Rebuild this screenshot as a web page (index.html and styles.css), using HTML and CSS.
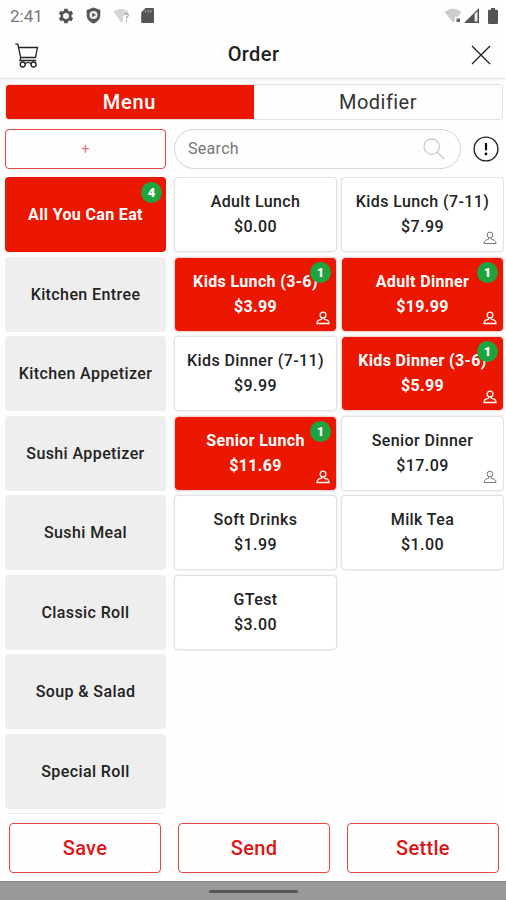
FILE: index.html
```html
<!DOCTYPE html>
<html lang="en">
<head>
<meta charset="utf-8">
<title>Order</title>
<link rel="stylesheet" href="styles.css">
</head>
<body>
<svg class="defs" aria-hidden="true">
  <symbol id="person" viewBox="0 0 14 14"><circle cx="7" cy="4" r="2.900"/><path d="M5.800 6.700 5.600 8.300 2.700 9.200Q1 9.900 1 12.500H13Q13 9.900 11.300 9.200L8.400 8.300 8.200 6.700"/></symbol>
</svg>
<div class="screen">
  <div class="status">
    <span class="clock">2:41</span>
    <svg class="gear" width="16" height="16" viewBox="0 0 24 24"><path fill="#555" fill-rule="evenodd" d="M9.500 1h5l.6 3.200 2 1.100 3.100-1.100 2.500 4.300-2.500 2.100v2.800l2.500 2.100-2.500 4.300-3.100-1.100-2 1.100-.6 3.200h-5l-.6-3.200-2-1.100-3.100 1.100-2.500-4.300 2.500-2.100v-2.800L1.300 8.500l2.500-4.300 3.100 1.100 2-1.100zM12 7.500a4.500 4.500 0 1 0 0 9 4.500 4.500 0 0 0 0-9z"/></svg>
    <svg class="shield" width="15" height="17" viewBox="0 0 15 17"><path fill="#555" d="M7.500.5 14.300 3v5.300c0 3.700-2.900 6.900-6.800 8.200C3.600 15.200.7 12 .7 8.300V3z"/><circle cx="7.500" cy="8" r="4" fill="#eee"/><path d="M6.200 5.700 10 8l-3.800 2.300z" fill="#555"/></svg>
    <svg class="wifi-q" width="17" height="15" viewBox="0 0 17 15"><path fill="#d6d6d6" d="M.5 3.500Q8-2 15.500 3.500L13 6.500 10 8v4l-2 2.500z"/><path d="M11.700 7a1.800 1.800 0 1 1 2.500 1.800c-.6.400-.7.800-.7 1.700M13.500 12v1.300" fill="none" stroke="#999" stroke-width="1.100"/></svg>
    <svg class="sd" width="13" height="15" viewBox="0 0 13 15"><path fill="#555" d="M4.500 0H12q1 0 1 1v13q0 1-1 1H1.200Q.2 15 .2 14V4.500z"/><path d="M4.700 2v2.500M7.300 2v2.500M9.900 2v2.500" stroke="#aaa"/></svg>
    <span class="spacer"></span>
    <svg class="wifi" width="18" height="16" viewBox="0 0 18 16"><path fill="#cdcdcd" d="M.5 4Q8.800-3 17.500 4l-3.700 4.700H11v4L9 14.500z"/><path fill="#666" d="M12.500 10.500h3.500V14h-3.500z"/></svg>
    <svg class="signal" width="16" height="15" viewBox="0 0 16 15"><path fill="#555" d="M0 15 15 0v15z"/><path fill="#eee" d="M10.600 6 13.500 3.200V13.500H10.600z"/></svg>
    <svg class="battery" width="10" height="16" viewBox="0 0 10 16"><path fill="#555" d="M3 0h4v1.700h2q1 0 1 1V15q0 1-1 1H1q-1 0-1-1V2.700q0-1 1-1h2z"/></svg>
  </div>
  <header class="header">
    <svg class="cart" width="25" height="26" viewBox="0 0 25 26" fill="none" stroke="#222" stroke-width="1.300"><path d="M.3 1.200h2.500L5.700 14.500H20.500L22.500 4.500H3.500M5.700 14.500 5 17.500h16.200"/><circle cx="7.700" cy="21.500" r="2.500"/><circle cx="18.600" cy="21.500" r="2.500"/><path d="M10.200 21q3-3.200 5.900 0"/></svg>
    <h1>Order</h1>
    <svg class="close" width="20" height="20" viewBox="0 0 20 20" stroke="#222" stroke-width="1.300"><path d="m1 1 18 18M19 1 1 19"/></svg>
  </header>
  <div class="tabs"><div class="tab active">Menu</div><div class="tab">Modifier</div></div>
  <div class="tools">
    <div class="add">+</div>
    <div class="search"><span>Search</span>
      <svg width="22" height="22" viewBox="0 0 22 22" fill="none" stroke="#ccc" stroke-width="1.300"><circle cx="8.700" cy="8.700" r="7.700"/><path d="m14.300 14.300 6.700 6.700"/></svg></div>
    <svg class="alert" width="26" height="26" viewBox="0 0 26 26"><circle cx="13" cy="13" r="11.900" fill="none" stroke="#222" stroke-width="1.400"/><path d="M13 7v7.300" stroke="#111" stroke-width="2.200"/><circle cx="13" cy="18" r="1.400" fill="#111"/></svg>
  </div>
  <main class="content">
    <nav class="categories">
      <div class="category selected">All You Can Eat<b class="badge">4</b></div>
      <div class="category">Kitchen Entree</div>
      <div class="category">Kitchen Appetizer</div>
      <div class="category">Sushi Appetizer</div>
      <div class="category">Sushi Meal</div>
      <div class="category">Classic Roll</div>
      <div class="category">Soup &amp; Salad</div>
      <div class="category">Special Roll</div>
      <div class="category"></div>
    </nav>
    <section class="items">
      <div class="item"><span>Adult Lunch</span><span>$0.00</span></div>
      <div class="item"><span>Kids Lunch (7-11)</span><span>$7.99</span><svg class="person"><use href="#person"/></svg></div>
      <div class="item selected"><span>Kids Lunch (3-6)</span><span>$3.99</span><b class="badge">1</b><svg class="person"><use href="#person"/></svg></div>
      <div class="item selected"><span>Adult Dinner</span><span>$19.99</span><b class="badge">1</b><svg class="person"><use href="#person"/></svg></div>
      <div class="item"><span>Kids Dinner (7-11)</span><span>$9.99</span></div>
      <div class="item selected"><span>Kids Dinner (3-6)</span><span>$5.99</span><b class="badge">1</b><svg class="person"><use href="#person"/></svg></div>
      <div class="item selected"><span>Senior Lunch</span><span>$11.69</span><b class="badge">1</b><svg class="person"><use href="#person"/></svg></div>
      <div class="item"><span>Senior Dinner</span><span>$17.09</span><svg class="person"><use href="#person"/></svg></div>
      <div class="item"><span>Soft Drinks</span><span>$1.99</span></div>
      <div class="item"><span>Milk Tea</span><span>$1.00</span></div>
      <div class="item"><span>GTest</span><span>$3.00</span></div>
    </section>
  </main>
  <footer class="actions"><div>Save</div><div>Send</div><div>Settle</div></footer>
  <div class="navbar"><i></i></div>
</div>
</body>
</html>
```
FILE: styles.css
```css
* { box-sizing: border-box; }
body { margin: 0; background: #fefefe; color: #222; font-family: Roboto, sans-serif; }
svg { flex: none; }
.defs { display: block; width: 0; height: 0; }
.screen { width: 506px; height: 900px; display: flex; flex-direction: column; overflow: hidden; }
.status { height: 31px; flex: none; display: flex; align-items: center; padding: 0 8px 0 10px; }
.clock { width: 48px; font-size: 17px; letter-spacing: 0; color: #777; }
.shield { margin-left: 12px; }
.wifi-q { margin-left: 12px; }
.sd { margin-left: 11px; }
.spacer { flex: 1; }
.signal { margin-left: 2px; }
.battery { margin-left: 8px; }
.header { height: 47px; flex: none; display: grid; grid-template-columns: 40px 1fr 40px; align-items: center; padding: 0 15px; box-shadow: 0 1px 2px #ddd; }
.header h1 { margin: 0; text-align: center; font-size: 20px; font-weight: 500; letter-spacing: 0.4px; line-height: 44px; padding: 0 0 2px 1px; }
.cart { margin-top: 2px; }
.close { justify-self: end; }
.tabs { height: 36px; flex: none; margin: 6px 3px 0 5px; display: grid; grid-template-columns: 1fr 1fr; border: 1px solid #e2e2e2; border-radius: 4px; overflow: hidden; }
.tab { display: flex; align-items: center; justify-content: center; font-size: 20px; letter-spacing: 0.45px; color: #333; }
.tab.active { margin: -1px 0 -1px -1px; background: #eb1700; color: #fff; font-weight: 500; letter-spacing: 0.7px; }
.tools { height: 40px; flex: none; margin: 9px 7px 0 5px; display: flex; align-items: center; }
.add { width: 161px; height: 40px; border: 1px solid #e34545; border-radius: 4px; display: flex; align-items: center; justify-content: center; color: #f07070; font-size: 14px; }
.search { width: 287px; height: 40px; margin: 0 12px 0 8px; padding: 0 15px 1px 13px; border: 1px solid #d4d4d4; border-radius: 20px; display: flex; align-items: center; justify-content: space-between; color: #777; font-size: 16px; letter-spacing: 0.3px; }
.content { flex: 1; min-height: 0; margin: 8px 2px 0 5px; display: grid; grid-template-columns: 161px 330px; column-gap: 8px; overflow: hidden; }
.categories, .items { display: grid; grid-auto-rows: 75px; align-content: start; row-gap: 4.5px; }
.items { grid-template-columns: 163px 163px; column-gap: 4px; }
.category, .item { position: relative; display: flex; align-items: center; justify-content: center; border-radius: 4px; font-size: 16px; font-weight: 500; letter-spacing: 0.4px; white-space: nowrap; }
.category { background: #eee; }
.category.selected { background: #eb1700; color: #fff; font-weight: 700; letter-spacing: 0.35px; }
.item { flex-direction: column; line-height: 25px; padding-bottom: 1px; border: 1px solid #e2e2e2; box-shadow: 0 0 1px 1px #f2f2f2; background: #fff; }
.item.selected { background: #eb1700; border-color: #f9d5d2; background-clip: padding-box; color: #fff; font-weight: 700; letter-spacing: 0.35px; }
.badge { position: absolute; top: 5px; right: 4px; width: 21px; height: 21px; border-radius: 50%; background: #1fa33f; color: #fff; font-size: 13px; line-height: 21px; text-align: center; letter-spacing: 0; }
.item .badge { top: 4px; right: 5px; }
.person { position: absolute; right: 6px; bottom: 6px; width: 14px; height: 14px; fill: none; stroke: #777; stroke-width: 1; }
.selected .person { stroke: #fff; stroke-width: 1.3; }
.actions { height: 67px; flex: none; padding: 9px 7px 8px 9px; display: grid; grid-template-columns: repeat(3, 152px); justify-content: space-between; }
.actions div { border: 1px solid #e34545; border-radius: 4px; display: flex; align-items: center; justify-content: center; color: #df1515; font-size: 20px; font-weight: 500; letter-spacing: 0.3px; }
.navbar { height: 19px; flex: none; background: #999; border-top: 1px solid #888; display: flex; justify-content: center; align-items: center; }
.navbar i { width: 89px; height: 3px; margin-top: 1px; border-radius: 2px; background: #555; }
```
